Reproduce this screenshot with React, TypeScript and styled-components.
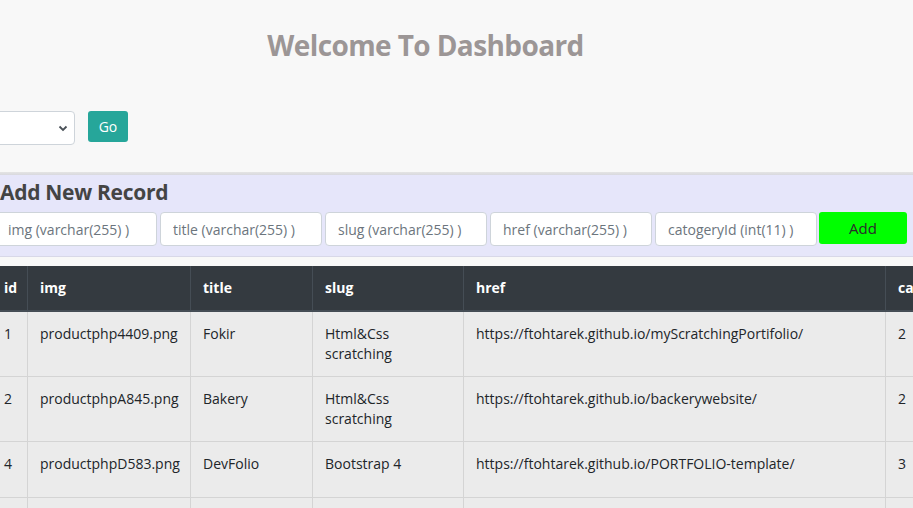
import React from "react";
import styled, { createGlobalStyle } from "styled-components";

const Global = createGlobalStyle`
  html, body { margin: 0; padding: 0; }
  body {
    background: #f8f8f8;
    font-family: "Open Sans", "Noto Sans", sans-serif;
    color: #212529;
    overflow: hidden;
    width: 913px;
    height: 508px;
  }
`;

const Viewport = styled.div`
  width: 913px;
  height: 508px;
  overflow: hidden;
`;

const Canvas = styled.div`
  margin-left: -62px;
  width: 1160px;
`;

const Header = styled.header`
  width: 975px;
  height: 172px;
  box-sizing: border-box;
  padding-top: 26px;
  display: flex;
  flex-direction: column;
`;

const Title = styled.h1`
  margin: 0;
  text-align: center;
  font-size: 28px;
  line-height: 38px;
  font-weight: 700;
  color: #9c9696;
  letter-spacing: -0.6px;
`;

const Controls = styled.div`
  margin-top: 47px;
  display: flex;
  align-items: center;
  gap: 13px;
`;

const Select = styled.div`
  width: 137px;
  height: 34px;
  box-sizing: border-box;
  background: #fff;
  border: 1px solid #ced4da;
  border-radius: 4px;
  display: flex;
  align-items: center;
  justify-content: flex-end;
  padding-right: 6px;
`;

const GoButton = styled.button`
  width: 40px;
  height: 31px;
  border: none;
  border-radius: 3px;
  background: #26a69a;
  color: #fff;
  font-family: inherit;
  font-size: 14px;
  padding: 0;
  margin-top: -3px;
`;

const Divider = styled.div`
  height: 3px;
  background: linear-gradient(#e4e4e4, #d9d9de);
`;

const Panel = styled.section`
  background: #e6e6fa;
  padding: 2px 0 10px 57px;
  border-bottom: 1px solid #d8d8e8;
`;

const PanelTitle = styled.h2`
  margin: 0 0 0 5px;
  font-size: 21px;
  line-height: 30px;
  font-weight: 700;
  color: #444;
  letter-spacing: -0.3px;
`;

const FormRow = styled.div`
  display: flex;
  gap: 3px;
  margin-top: 5px;
  align-items: flex-start;
`;

const Field = styled.input`
  width: 162px;
  height: 34px;
  box-sizing: border-box;
  border: 1px solid #ced4da;
  border-radius: 4px;
  background: #fff;
  padding: 6px 12px;
  font-family: inherit;
  font-size: 14px;
  outline: none;
  &::placeholder { color: #6c757d; }
`;

const AddButton = styled.button`
  width: 88px;
  height: 32px;
  border: none;
  border-radius: 3px;
  background: #00ff00;
  color: #2b2b2b;
  font-family: inherit;
  font-size: 15px;
  margin-left: -1px;
`;

const Spacer = styled.div`
  height: 9px;
`;

const Table = styled.table`
  margin-left: 53px;
  border-collapse: collapse;
  table-layout: fixed;
  width: 1100px;
  font-size: 14px;
  line-height: 20px;
`;

const Th = styled.th<{ $w: number }>`
  box-sizing: border-box;
  width: ${(p) => p.$w}px;
  background: #343a40;
  color: #fff;
  text-align: left;
  font-weight: 700;
  padding: 12px 12px;
  border: 1px solid #454d55;
  border-top: none;
  border-bottom-width: 2px;
`;

const Tr = styled.tr<{ $h: number }>`
  height: ${(p) => p.$h}px;
`;

const Td = styled.td`
  background: #ebebeb;
  vertical-align: top;
  padding: 12px 12px;
  border: 1px solid #d4d4d4;
  color: #212529;
`;

const Chevron = () => (
  <svg width="10" height="8" viewBox="0 0 10 8">
    <path d="M1.5 2.5 L5 6 L8.5 2.5" fill="none" stroke="#495057" strokeWidth="1.8" />
  </svg>
);

const cols: [string, number][] = [
  ["id", 36],
  ["img", 163],
  ["title", 122],
  ["slug", 151],
  ["href", 422],
  ["catogeryId", 206],
];

const rows = [
  { h: 65, c: ["1", "productphp4409.png", "Fokir", "Html&Css scratching", "https://ftohtarek.github.io/myScratchingPortifolio/", "2"] },
  { h: 65, c: ["2", "productphpA845.png", "Bakery", "Html&Css scratching", "https://ftohtarek.github.io/backerywebsite/", "2"] },
  { h: 56, c: ["4", "productphpD583.png", "DevFolio", "Bootstrap 4", "https://ftohtarek.github.io/PORTFOLIO-template/", "3"] },
  { h: 57, c: ["", "", "", "", "", ""] },
];

const placeholders = [
  "img (varchar(255) )",
  "title (varchar(255) )",
  "slug (varchar(255) )",
  "href (varchar(255) )",
  "catogeryId (int(11) )",
];

export default function App() {
  return (
    <Viewport>
      <Global />
      <Canvas>
        <Header>
          <Title>Welcome To Dashboard</Title>
          <Controls>
            <Select>
              <Chevron />
            </Select>
            <GoButton>Go</GoButton>
          </Controls>
        </Header>
        <Divider />
        <Panel>
          <PanelTitle>Add New Record</PanelTitle>
          <FormRow>
            {placeholders.map((p) => (
              <Field key={p} placeholder={p} />
            ))}
            <AddButton>Add</AddButton>
          </FormRow>
        </Panel>
        <Spacer />
        <Table>
          <thead>
            <tr>
              {cols.map(([n, w]) => (
                <Th key={n} $w={w}>{n}</Th>
              ))}
            </tr>
          </thead>
          <tbody>
            {rows.map((r, i) => (
              <Tr key={i} $h={r.h}>
                {r.c.map((c, j) => (
                  <Td key={j}>{c}</Td>
                ))}
              </Tr>
            ))}
          </tbody>
        </Table>
      </Canvas>
    </Viewport>
  );
}
